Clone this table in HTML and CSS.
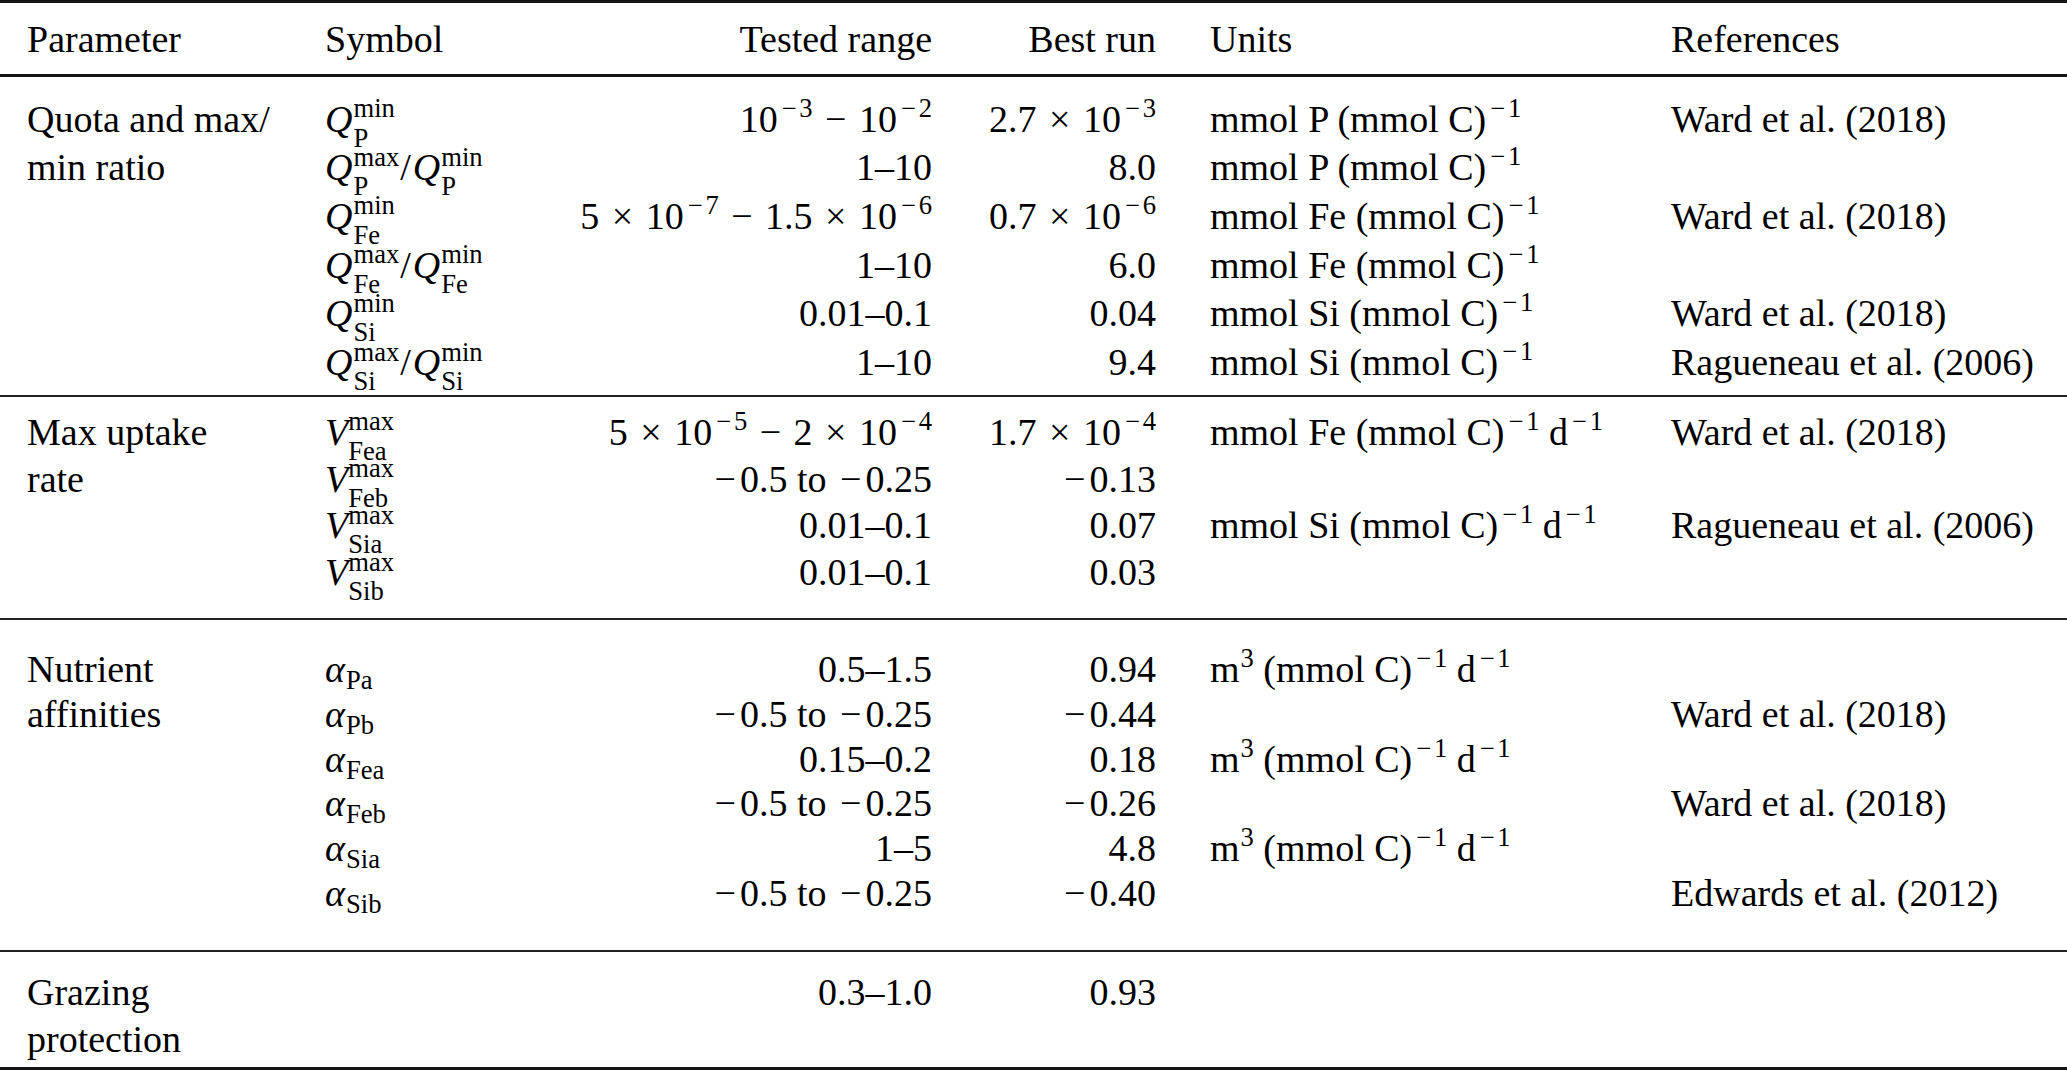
FILE: index.html
```html
<!DOCTYPE html>
<html lang="en">
<head>
<meta charset="utf-8">
<title>Parameter table</title>
<link rel="stylesheet" href="styles.css">
</head>
<body>
<table class="tbl">
  <colgroup>
    <col class="c1"><col class="c2"><col class="c3"><col class="c4"><col class="c5"><col class="c6">
  </colgroup>
  <thead>
    <tr>
      <th class="first">Parameter</th>
      <th>Symbol</th>
      <th class="r">Tested range</th>
      <th class="r">Best run</th>
      <th class="u">Units</th>
      <th>References</th>
    </tr>
  </thead>
  <tbody class="g g1">
    <tr>
      <td class="first">Quota and max/</td>
      <td><span class="q">Q</span><span class="ss"><span>min</span><span>P</span></span></td>
      <td class="r">10<span class="e"><span class="mn">−</span>3</span><span class="bo">−</span>10<span class="e"><span class="mn">−</span>2</span></td>
      <td class="r">2.7<span class="bo">×</span>10<span class="e"><span class="mn">−</span>3</span></td>
      <td class="u">mmol P (mmol C)<span class="e"><span class="mn">−</span>1</span></td>
      <td>Ward et al. (2018)</td>
    </tr>
    <tr>
      <td class="first">min ratio</td>
      <td><span class="q">Q</span><span class="ss"><span>max</span><span>P</span></span><span class="sl">/</span><span class="q">Q</span><span class="ss"><span>min</span><span>P</span></span></td>
      <td class="r">1–10</td>
      <td class="r">8.0</td>
      <td class="u">mmol P (mmol C)<span class="e"><span class="mn">−</span>1</span></td>
      <td></td>
    </tr>
    <tr>
      <td class="first"></td>
      <td><span class="q">Q</span><span class="ss"><span>min</span><span>Fe</span></span></td>
      <td class="r">5<span class="bo">×</span>10<span class="e"><span class="mn">−</span>7</span><span class="bo">−</span>1.5<span class="bo">×</span>10<span class="e"><span class="mn">−</span>6</span></td>
      <td class="r">0.7<span class="bo">×</span>10<span class="e"><span class="mn">−</span>6</span></td>
      <td class="u">mmol Fe (mmol C)<span class="e"><span class="mn">−</span>1</span></td>
      <td>Ward et al. (2018)</td>
    </tr>
    <tr>
      <td class="first"></td>
      <td><span class="q">Q</span><span class="ss"><span>max</span><span>Fe</span></span><span class="sl">/</span><span class="q">Q</span><span class="ss"><span>min</span><span>Fe</span></span></td>
      <td class="r">1–10</td>
      <td class="r">6.0</td>
      <td class="u">mmol Fe (mmol C)<span class="e"><span class="mn">−</span>1</span></td>
      <td></td>
    </tr>
    <tr>
      <td class="first"></td>
      <td><span class="q">Q</span><span class="ss"><span>min</span><span>Si</span></span></td>
      <td class="r">0.01–0.1</td>
      <td class="r">0.04</td>
      <td class="u">mmol Si (mmol C)<span class="e"><span class="mn">−</span>1</span></td>
      <td>Ward et al. (2018)</td>
    </tr>
    <tr>
      <td class="first"></td>
      <td><span class="q">Q</span><span class="ss"><span>max</span><span>Si</span></span><span class="sl">/</span><span class="q">Q</span><span class="ss"><span>min</span><span>Si</span></span></td>
      <td class="r">1–10</td>
      <td class="r">9.4</td>
      <td class="u">mmol Si (mmol C)<span class="e"><span class="mn">−</span>1</span></td>
      <td>Ragueneau et al. (2006)</td>
    </tr>
  </tbody>
  <tbody class="g g2">
    <tr>
      <td class="first">Max uptake</td>
      <td><span class="q">V</span><span class="ss v"><span>max</span><span>Fea</span></span></td>
      <td class="r">5<span class="bo">×</span>10<span class="e"><span class="mn">−</span>5</span><span class="bo">−</span>2<span class="bo">×</span>10<span class="e"><span class="mn">−</span>4</span></td>
      <td class="r">1.7<span class="bo">×</span>10<span class="e"><span class="mn">−</span>4</span></td>
      <td class="u">mmol Fe (mmol C)<span class="e"><span class="mn">−</span>1</span> d<span class="e"><span class="mn">−</span>1</span></td>
      <td>Ward et al. (2018)</td>
    </tr>
    <tr>
      <td class="first">rate</td>
      <td><span class="q">V</span><span class="ss v"><span>max</span><span>Feb</span></span></td>
      <td class="r"><span class="mn">−</span>0.5 to <span class="mn">−</span>0.25</td>
      <td class="r"><span class="mn">−</span>0.13</td>
      <td class="u"></td>
      <td></td>
    </tr>
    <tr>
      <td class="first"></td>
      <td><span class="q">V</span><span class="ss v"><span>max</span><span>Sia</span></span></td>
      <td class="r">0.01–0.1</td>
      <td class="r">0.07</td>
      <td class="u">mmol Si (mmol C)<span class="e"><span class="mn">−</span>1</span> d<span class="e"><span class="mn">−</span>1</span></td>
      <td>Ragueneau et al. (2006)</td>
    </tr>
    <tr>
      <td class="first"></td>
      <td><span class="q">V</span><span class="ss v"><span>max</span><span>Sib</span></span></td>
      <td class="r">0.01–0.1</td>
      <td class="r">0.03</td>
      <td class="u"></td>
      <td></td>
    </tr>
  </tbody>
  <tbody class="g g3">
    <tr>
      <td class="first">Nutrient</td>
      <td><span class="q">α</span><span class="sb">Pa</span></td>
      <td class="r">0.5–1.5</td>
      <td class="r">0.94</td>
      <td class="u">m<span class="e">3</span> (mmol C)<span class="e"><span class="mn">−</span>1</span> d<span class="e"><span class="mn">−</span>1</span></td>
      <td></td>
    </tr>
    <tr>
      <td class="first">affinities</td>
      <td><span class="q">α</span><span class="sb">Pb</span></td>
      <td class="r"><span class="mn">−</span>0.5 to <span class="mn">−</span>0.25</td>
      <td class="r"><span class="mn">−</span>0.44</td>
      <td class="u"></td>
      <td>Ward et al. (2018)</td>
    </tr>
    <tr>
      <td class="first"></td>
      <td><span class="q">α</span><span class="sb">Fea</span></td>
      <td class="r">0.15–0.2</td>
      <td class="r">0.18</td>
      <td class="u">m<span class="e">3</span> (mmol C)<span class="e"><span class="mn">−</span>1</span> d<span class="e"><span class="mn">−</span>1</span></td>
      <td></td>
    </tr>
    <tr>
      <td class="first"></td>
      <td><span class="q">α</span><span class="sb">Feb</span></td>
      <td class="r"><span class="mn">−</span>0.5 to <span class="mn">−</span>0.25</td>
      <td class="r"><span class="mn">−</span>0.26</td>
      <td class="u"></td>
      <td>Ward et al. (2018)</td>
    </tr>
    <tr>
      <td class="first"></td>
      <td><span class="q">α</span><span class="sb">Sia</span></td>
      <td class="r">1–5</td>
      <td class="r">4.8</td>
      <td class="u">m<span class="e">3</span> (mmol C)<span class="e"><span class="mn">−</span>1</span> d<span class="e"><span class="mn">−</span>1</span></td>
      <td></td>
    </tr>
    <tr>
      <td class="first"></td>
      <td><span class="q">α</span><span class="sb">Sib</span></td>
      <td class="r"><span class="mn">−</span>0.5 to <span class="mn">−</span>0.25</td>
      <td class="r"><span class="mn">−</span>0.40</td>
      <td class="u"></td>
      <td>Edwards et al. (2012)</td>
    </tr>
  </tbody>
  <tbody class="g g4">
    <tr>
      <td class="first">Grazing</td>
      <td></td>
      <td class="r">0.3–1.0</td>
      <td class="r">0.93</td>
      <td class="u"></td>
      <td></td>
    </tr>
    <tr>
      <td class="first">protection</td>
      <td></td>
      <td class="r"></td>
      <td class="r"></td>
      <td class="u"></td>
      <td></td>
    </tr>
  </tbody>
</table>
</body>
</html>
```

FILE: styles.css
```css
html, body {
  margin: 0;
  padding: 0;
  background: #ffffff;
}

body {
  font-family: "Liberation Serif", "Times New Roman", "DejaVu Serif", serif;
  color: #000000;
  width: 2067px;
  height: 1070px;
  overflow: hidden;
}

.tbl {
  width: 2067px;
  border-collapse: separate;
  border-spacing: 0;
  table-layout: fixed;
  font-family: "Liberation Serif", "Times New Roman", "DejaVu Serif", serif;
  font-size: 38px;
}

.c1 { width: 325px; }
.c2 { width: 235px; }
.c3 { width: 372px; }
.c4 { width: 224px; }
.c5 { width: 515px; }
.c6 { width: 396px; }

.tbl th,
.tbl td {
  padding: 0;
  font-weight: normal;
  text-align: left;
  white-space: nowrap;
  vertical-align: baseline;
}

.tbl .first { padding-left: 27px; }
.tbl .r { text-align: right; }
.tbl .u { padding-left: 54px; }

/* header */
.tbl thead th {
  line-height: 64px;
  padding-top: 4px;
  padding-bottom: 2.5px;
  border-top: 3px solid #151515;
  border-bottom: 3px solid #151515;
}

/* row groups */
.g1 td { line-height: 48.7px; }
.g1 tr:first-child td { padding-top: 18px; }
.g1 tr:last-child td { padding-bottom: 8px; }

.g2 td { line-height: 46.8px; }
.g2 tr:first-child td { padding-top: 12px; border-top: 2px solid #222; }
.g2 tr:last-child td { padding-bottom: 22.5px; }

.g3 td { line-height: 44.8px; }
.g3 tr:first-child td { padding-top: 26.5px; border-top: 2px solid #222; }
.g3 tr:last-child td { padding-bottom: 34.5px; }

.g4 td { line-height: 47px; }
.g4 tr:first-child td { padding-top: 16.5px; border-top: 2px solid #222; }
.g4 tr:last-child td { padding-bottom: 4px; border-bottom: 3px solid #151515; }

/* math */
.q {
  font-style: italic;
}

.ss {
  display: inline-flex;
  flex-direction: column;
  vertical-align: 14.5px;
  font-size: 26.6px;
  line-height: 29.5px;
  margin: -8px 0 -14px 1px;
}

.ss > span {
  display: block;
  line-height: 29.5px;
}

.ss.v {
  margin-left: 0;
}

.sl {
  margin: 0 2px 0 1px;
}

.sb {
  font-size: 26.6px;
  line-height: 0;
  vertical-align: -7px;
  margin-left: 1px;
}

.e {
  font-size: 26.6px;
  line-height: 0;
  vertical-align: 15px;
  margin-left: 1px;
}

.mn {
  display: inline-block;
  width: 0.778em;
  text-align: center;
}

.bo {
  display: inline-block;
  width: 0.778em;
  margin: 0 0.222em;
  text-align: center;
}
```
